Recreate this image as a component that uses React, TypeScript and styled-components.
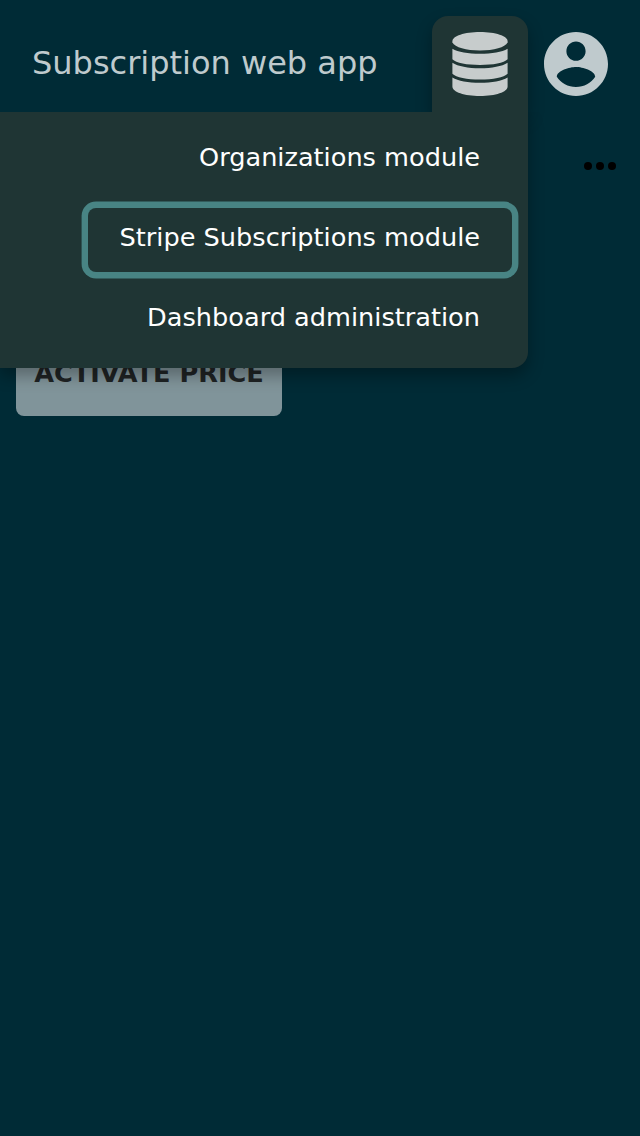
import React from "react";
import styled, { createGlobalStyle } from "styled-components";

const GlobalStyle = createGlobalStyle`
  * { box-sizing: border-box; }
  html, body { margin: 0; background: #002b36; }
  body { font-family: "DejaVu Sans", sans-serif; overflow: hidden; }
`;

const Page = styled.div`
  position: relative;
  width: 640px;
  height: 1136px;
  overflow: hidden;
  background: #002b36;
`;

const Header = styled.header`
  display: flex;
  align-items: flex-end;
  height: 112px;
  padding-right: 16px;
`;

const Title = styled.h1`
  flex: 1;
  margin: 0;
  padding: 0 0 2px 32px;
  font-size: 32px;
  font-weight: 400;
  line-height: 94px;
  white-space: nowrap;
  color: #bfcacd;
`;

const HeaderButton = styled.button<{ $open?: boolean }>`
  display: flex;
  justify-content: center;
  width: 96px;
  height: 96px;
  padding: 16px 0 0;
  border: 0;
  border-radius: 16px 16px 0 0;
  color: ${(p) => (p.$open ? "#c7cccc" : "#bfcacd")};
  background: ${(p) => (p.$open ? "#1f3534" : "transparent")};
  box-shadow: ${(p) => (p.$open ? "0 8px 16px rgba(0, 0, 0, 0.3)" : "none")};
`;

const Menu = styled.nav`
  position: absolute;
  top: 112px;
  left: 0;
  width: 528px;
  height: 256px;
  padding: 16px;
  display: flex;
  flex-direction: column;
  align-items: flex-end;
  gap: 16px;
  border-radius: 0 0 16px 0;
  background: #1f3534;
  box-shadow: 0 8px 16px rgba(0, 0, 0, 0.3);
  clip-path: inset(0 -40px -40px 0);
`;

const MenuItem = styled.a<{ $focused?: boolean }>`
  height: 64px;
  padding: 0 32px;
  border-radius: 8px;
  font-size: 25.6px;
  line-height: 58px;
  white-space: nowrap;
  color: #fff;
  box-shadow: ${(p) => (p.$focused ? "0 0 0 6.4px #488484" : "none")};
`;

const Content = styled.main`
  padding: 16px;
`;

const Toolbar = styled.div`
  display: flex;
  justify-content: flex-end;
  height: 208px;
  padding: 34px 8px 0 0;
`;

const ActionButton = styled.button`
  display: flex;
  align-items: flex-start;
  justify-content: center;
  width: 266px;
  height: 80px;
  padding: 0;
  border: 0;
  border-radius: 8px;
  font: 700 25.6px/74px "DejaVu Sans", sans-serif;
  white-space: nowrap;
  color: #1f2324;
  background: #80949a;
`;

function DatabaseIcon() {
  return (
    <svg width="56" height="64" viewBox="0 0 56 64" fill="currentColor">
      <path d="M28 0C43.5 0 55.6 4 55.6 9.2V10.6C53 15.5 42 18.6 28 18.6S3 15.5 .4 10.6V9.2C.4 4 12.5 0 28 0Z" />
      <path d="M.4 16.7C6 20 16 21.8 28 21.8S50 20 55.6 16.7V27.3C52 31 41 33 28 33S4 31 .4 27.3Z" />
      <path d="M.4 30.8C6 34.4 16 36.3 28 36.3S50 34.4 55.6 30.8V41.7C52 45.4 41 47.6 28 47.6S4 45.4 .4 41.7Z" />
      <path d="M.4 45.4C6 48.9 16 50.8 28 50.8S50 48.9 55.6 45.4V54.5C55.6 60 43.5 64 28 64S.4 60 .4 54.5Z" />
    </svg>
  );
}

function AccountIcon() {
  return (
    <svg width="64" height="64" viewBox="2 2 20 20" fill="currentColor">
      <path d="M12 2C6.48 2 2 6.48 2 12s4.48 10 10 10 10-4.48 10-10S17.52 2 12 2zm0 3c1.66 0 3 1.34 3 3s-1.34 3-3 3-3-1.34-3-3 1.34-3 3-3zm0 14.2c-2.5 0-4.71-1.28-6-3.22.03-1.99 4-3.08 6-3.08 1.99 0 5.97 1.09 6 3.08-1.29 1.94-3.5 3.22-6 3.22z" />
    </svg>
  );
}

function MoreIcon() {
  return (
    <svg width="32" height="8" viewBox="0 0 32 8" fill="#000">
      <circle cx="4" cy="4" r="4" />
      <circle cx="16" cy="4" r="4" />
      <circle cx="28" cy="4" r="4" />
    </svg>
  );
}

export default function App() {
  return (
    <Page>
      <GlobalStyle />
      <Header>
        <Title>Subscription web app</Title>
        <HeaderButton $open aria-label="Modules">
          <DatabaseIcon />
        </HeaderButton>
        <HeaderButton aria-label="Account">
          <AccountIcon />
        </HeaderButton>
      </Header>
      <Content>
        <Toolbar>
          <MoreIcon />
        </Toolbar>
        <ActionButton>ACTIVATE PRICE</ActionButton>
      </Content>
      <Menu>
        <MenuItem>Organizations module</MenuItem>
        <MenuItem $focused>Stripe Subscriptions module</MenuItem>
        <MenuItem>Dashboard administration</MenuItem>
      </Menu>
    </Page>
  );
}
